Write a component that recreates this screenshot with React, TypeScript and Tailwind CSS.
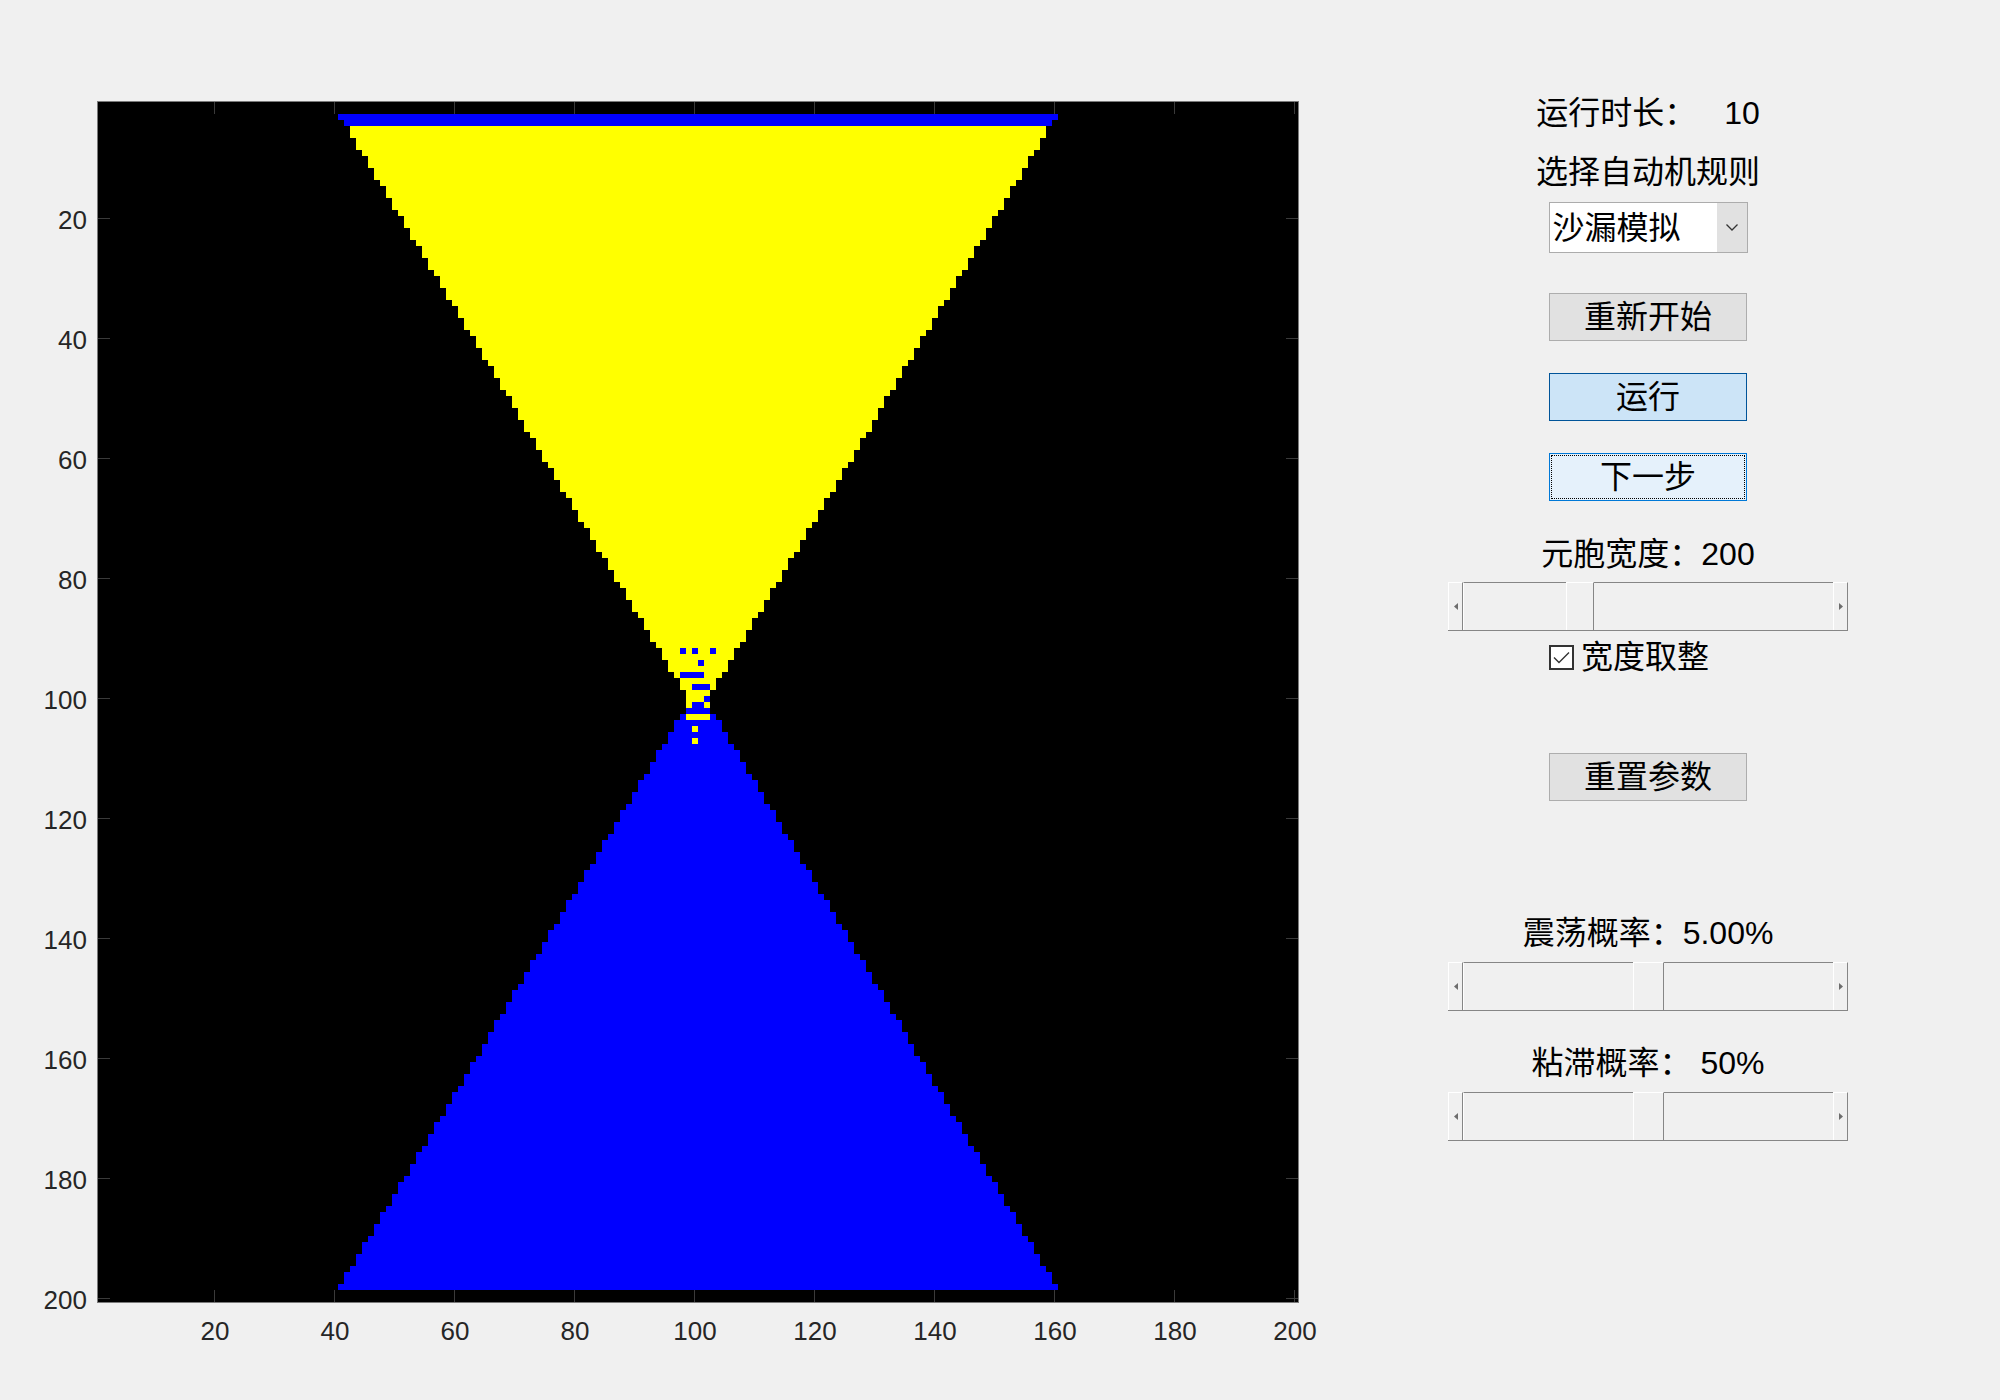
const ticks = [20, 40, 60, 80, 100, 120, 140, 160, 180, 200]

// hourglass walls, found by fitting the two slopes of the picture
const topStart = (r: number) => Math.floor(0.5975 * r + 40.13)
const botStart = (r: number) => Math.floor(0.5975 * (198 - r) + 41.7)

const blueHoles = new Set<number>([
  92098, 92100, 92103, 94101, 96098, 96099, 96100, 96101, 98100, 98101, 98102, 100102, 101100, 101101,
])
const yellowExtra = new Set<number>([103099, 103100, 103101, 103102, 105100, 107100])

const cellColor = (r: number, c: number) => {
  const key = r * 1000 + c
  if (blueHoles.has(key)) return "b"
  if (yellowExtra.has(key)) return "y"
  return r >= 5 && r <= 101 ? "y" : "b"
}

function buildPaths() {
  let yellow = ""
  let blue = ""
  for (let r = 3; r <= 198; r++) {
    const s = Math.min(topStart(r), botStart(r))
    const e = 201 - s
    let runStart = s
    let runColor = cellColor(r, s)
    for (let c = s + 1; c <= e + 1; c++) {
      const col = c <= e ? cellColor(r, c) : "end"
      if (col !== runColor) {
        const x = 1 + (runStart - 1) * 6
        const y = 1 + (r - 1) * 6
        const d = `M${x} ${y}h${(c - runStart) * 6}v6h-${(c - runStart) * 6}z`
        if (runColor === "y") yellow += d
        else blue += d
        runStart = c
        runColor = col
      }
    }
  }
  return { yellow, blue }
}

const { yellow, blue } = buildPaths()

const SandPlot = () => (
  <svg width="1202" height="1202" viewBox="0 0 1202 1202" shapeRendering="crispEdges">
    <rect x="1" y="1" width="1200" height="1200" fill="#000" />
    <path d={yellow} fill="#ffff00" />
    <path d={blue} fill="#0000ff" />
    {ticks.map((v) => (
      <g key={v} fill="#3a3a3a">
        <rect x={6 * v - 3} y="1" width="1" height="12" />
        <rect x={6 * v - 3} y="1189" width="1" height="12" />
        <rect x="1" y={6 * v - 3} width="12" height="1" />
        <rect x="1189" y={6 * v - 3} width="12" height="1" />
      </g>
    ))}
    <rect x="0.5" y="0.5" width="1201" height="1201" fill="none" stroke="#7a7a7a" strokeWidth="1" />
  </svg>
)

const LeftArrow = () => (
  <svg width="4" height="7" viewBox="0 0 4 7">
    <path d="M4 0L0 3.5L4 7z" fill="#6d6d6d" />
  </svg>
)

const RightArrow = () => (
  <svg width="4" height="7" viewBox="0 0 4 7">
    <path d="M0 0L4 3.5L0 7z" fill="#6d6d6d" />
  </svg>
)

const Slider = ({ offset, thumb }: { offset: string; thumb: string }) => (
  <div className="flex h-[49px] w-[400px] border-b border-[#868686]">
    <div className="flex w-[15px] items-center justify-center border-l border-t border-r border-white border-r-[#868686]">
      <LeftArrow />
    </div>
    <div className="flex flex-1 border-t border-l border-[#868686] border-l-white">
      <div className={offset} />
      <div className={`${thumb} -mt-px border-t border-l border-r border-white border-r-[#868686]`} />
      <div className="flex-1" />
    </div>
    <div className="flex w-[15px] items-center justify-center border-l border-t border-r border-white border-r-[#868686]">
      <RightArrow />
    </div>
  </div>
)

const TextLine = ({ children, className = "" }: { children: React.ReactNode; className?: string }) => (
  <div className={`flex h-[40px] items-center justify-center whitespace-pre text-[32px] leading-none text-black ${className}`}>
    {children}
  </div>
)

const GrayButton = ({ label, className = "" }: { label: string; className?: string }) => (
  <button className={`flex h-[48px] w-[198px] items-center justify-center border border-[#adadad] bg-[#e1e1e1] text-[32px] leading-none text-black ${className}`}>
    {label}
  </button>
)

export default function App() {
  return (
    <div className="flex h-[1400px] w-[2000px] overflow-hidden bg-[#f0f0f0] font-['Liberation_Sans','Noto_Sans_CJK_SC',sans-serif]">
      {/* axes */}
      <div className="flex w-[1299px] shrink-0 flex-col pt-[101px]">
        <div className="flex h-[1202px]">
          <div className="flex w-[87px] shrink-0 flex-col pt-[59px] text-[26px] leading-none text-[#262626]">
            {ticks.map((v) => (
              <div key={v} className="flex h-[120px] shrink-0 items-center justify-end">
                {v}
              </div>
            ))}
          </div>
          <div className="ml-[10px] shrink-0">
            <SandPlot />
          </div>
        </div>
        <div className="ml-[155px] mt-[15px] flex text-[26px] leading-none text-[#262626]">
          {ticks.map((v) => (
            <div key={v} className="w-[120px] shrink-0 text-center">
              {v}
            </div>
          ))}
        </div>
      </div>

      {/* controls */}
      <div className="ml-[149px] flex w-[400px] shrink-0 flex-col items-center">
        <TextLine className="mt-[93px]">
          <span>运行时长：</span>
          <span className="ml-[28px]">10</span>
        </TextLine>
        <TextLine className="mt-[19px]">选择自动机规则</TextLine>
        <div className="mt-[10px] flex h-[51px] w-[199px] border border-[#acacac] bg-white">
          <div className="flex flex-1 items-center pl-[3px] text-[32px] leading-none text-black">沙漏模拟</div>
          <div className="flex w-[30px] items-center justify-center bg-[#e1e1e1]">
            <svg width="12" height="7" viewBox="0 0 12 7">
              <path d="M0.5 0.5L6 6L11.5 0.5" fill="none" stroke="#333333" strokeWidth="1.3" />
            </svg>
          </div>
        </div>
        <GrayButton label="重新开始" className="mt-[40px]" />
        <button className="mt-[32px] flex h-[48px] w-[198px] items-center justify-center border border-[#005499] bg-[#cce4f7] text-[32px] leading-none text-black">
          运行
        </button>
        <button className="mt-[32px] flex h-[48px] w-[198px] border border-[#0078d7] bg-[#e5f1fb] p-px">
          <span className="flex h-full w-full items-center justify-center border border-dotted border-black text-[32px] leading-none text-black">
            下一步
          </span>
        </button>
        <TextLine className="mt-[33px]">
          <span>元胞宽度：</span>
          <span>200</span>
        </TextLine>
        <div className="mt-[8px]">
          <Slider offset="w-[102px]" thumb="w-[28px]" />
        </div>
        <div className="mt-[12px] flex h-[28px] w-[198px] items-center">
          <div className="flex h-[25px] w-[25px] items-center justify-center border-2 border-[#333333] bg-white">
            <svg width="17" height="13" viewBox="0 0 17 13">
              <path d="M1 6.5L6 11.5L16 1.5" fill="none" stroke="#333333" strokeWidth="1.4" />
            </svg>
          </div>
          <span className="ml-[7px] text-[32px] leading-none text-black">宽度取整</span>
        </div>
        <GrayButton label="重置参数" className="mt-[82px]" />
        <TextLine className="mt-[112px]">
          <span>震荡概率：</span>
          <span>5.00%</span>
        </TextLine>
        <div className="mt-[9px]">
          <Slider offset="w-[169px]" thumb="w-[31px]" />
        </div>
        <TextLine className="mt-[32px]">
          <span>粘滞概率：</span>
          <span> 50%</span>
        </TextLine>
        <div className="mt-[9px]">
          <Slider offset="w-[169px]" thumb="w-[31px]" />
        </div>
      </div>
    </div>
  )
}
